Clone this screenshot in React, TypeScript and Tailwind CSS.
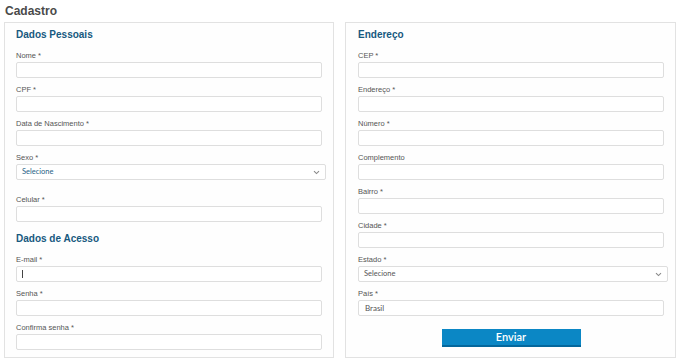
import React from 'react'

type Field = { label: string; kind?: 'input' | 'select'; value?: string; caret?: boolean; blue?: boolean }

function Chevron() {
  return (
    <svg width="7" height="5" viewBox="0 0 7 5" className="shrink-0">
      <path d="M1 1.2 L3.5 3.6 L6 1.2" fill="none" stroke="#8a8a8a" strokeWidth="1.1" />
    </svg>
  )
}

function FormField({ f, last }: { f: Field; last?: boolean }) {
  return (
    <div className={last ? '' : 'mb-[7px]'}>
      <label className="block h-[10px] mb-[1px] text-[7.5px] leading-[10px] text-[#555] font-['Liberation_Sans',Arial,sans-serif]">
        {f.label}
      </label>
      {f.kind === 'select' ? (
        <div className="flex items-center justify-between h-[16px] w-[310px] pl-[5px] pr-[5px] border border-[#dedede] rounded-[2px] bg-white">
          <span
            className={`text-[7.5px] leading-[10px] font-['Lato',sans-serif] ${f.blue ? 'text-[#1f5f86]' : 'text-[#555]'}`}
          >
            Selecione
          </span>
          <Chevron />
        </div>
      ) : (
        <div className="relative w-[306px] h-[16px] leading-none">
          <input
            readOnly
            defaultValue={f.value}
            className="block w-full h-full pl-[6px] border border-[#dedede] rounded-[2px] bg-white text-[8px] text-[#555] font-['Lato',sans-serif] outline-none"
          />
          {f.caret && <span className="absolute left-[6px] top-[4px] w-[1px] h-[8px] bg-[#444]" />}
        </div>
      )}
    </div>
  )
}

function Heading({ children }: { children: React.ReactNode }) {
  return (
    <h3 className="h-[12px] leading-[12px] mb-[10px] text-[10px] font-bold text-[#17597f] font-['Liberation_Sans',Arial,sans-serif]">
      {children}
    </h3>
  )
}

const pessoais: Field[] = [
  { label: 'Nome *' },
  { label: 'CPF *' },
  { label: 'Data de Nascimento *' },
  { label: 'Sexo *', kind: 'select', blue: true },
]

const acesso: Field[] = [
  { label: 'E-mail *', caret: true },
  { label: 'Senha *' },
  { label: 'Confirma senha *' },
]

const endereco: Field[] = [
  { label: 'CEP *' },
  { label: 'Endereço *' },
  { label: 'Número *' },
  { label: 'Complemento' },
  { label: 'Bairro *' },
  { label: 'Cidade *' },
  { label: 'Estado *', kind: 'select' },
  { label: 'País *', value: 'Brasil' },
]

export default function App() {
  return (
    <div className="w-[680px] h-[362px] bg-white pt-[4px] font-['Liberation_Sans',Arial,sans-serif]">
      <h1 className="pl-[5px] h-[14px] leading-[14px] text-[12px] font-bold text-[#4a4a4a]">Cadastro</h1>

      <div className="flex gap-[11px] mt-[4px] pl-[4px]">
        {/* Coluna esquerda */}
        <div className="w-[330px] border border-[#e2e2e2] bg-[#fefefe] pt-[6px] pb-[7px] pl-[11px]">
          <Heading>Dados Pessoais</Heading>
          {pessoais.map((f) => (
            <FormField key={f.label} f={f} />
          ))}
          <div className="mt-[15px]">
            <FormField f={{ label: 'Celular *' }} last />
          </div>
          <div className="mt-[11px]">
            <Heading>Dados de Acesso</Heading>
          </div>
          {acesso.map((f, i) => (
            <FormField key={f.label} f={f} last={i === acesso.length - 1} />
          ))}
        </div>

        {/* Coluna direita */}
        <div className="w-[331px] border border-[#e2e2e2] bg-[#fefefe] pt-[6px] pl-[12px]">
          <Heading>Endereço</Heading>
          {endereco.map((f, i) => (
            <FormField key={f.label} f={f} last={i === endereco.length - 1} />
          ))}
          <div className="flex justify-center w-[306px] mt-[13px]">
            <button className="w-[139px] h-[18px] bg-[#0b87c5] border-b-2 border-[#04679c] text-white text-[11px] font-semibold leading-[16px] font-['Lato',sans-serif]">
              Enviar
            </button>
          </div>
        </div>
      </div>
    </div>
  )
}
